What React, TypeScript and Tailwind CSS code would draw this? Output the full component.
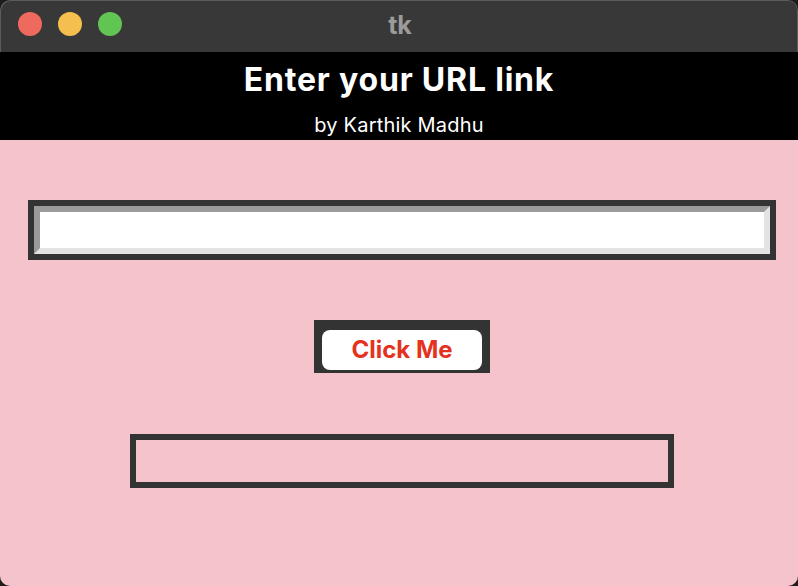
import React from "react";

export default function App() {
  return (
    <div className="w-[798px] h-[586px] bg-[#1c1c1c]" style={{ fontFamily: "Inter, 'Liberation Sans', sans-serif" }}>
      <div className="w-full h-full rounded-[10px] overflow-hidden flex flex-col">
        {/* title bar */}
        <div className="relative h-[52px] bg-[#383838] flex items-center justify-center shrink-0 rounded-t-[10px] shadow-[inset_1px_1px_0_#5c5c5c,inset_-1px_0_0_#5c5c5c]">
          <div className="absolute left-[18px] top-[12px] flex gap-[16px]">
            <div className="w-[24px] h-[24px] rounded-full bg-[#ee6a5f]" />
            <div className="w-[24px] h-[24px] rounded-full bg-[#f5bf4f]" />
            <div className="w-[24px] h-[24px] rounded-full bg-[#61c554]" />
          </div>
          <span className="text-[25px] font-bold text-[#9b9b9b] leading-none ml-[2px] mb-[2px]">tk</span>
        </div>
        {/* header */}
        <div className="h-[88px] bg-black flex flex-col items-center shrink-0">
          <div className="text-white font-bold text-[32px] tracking-[0.8px] leading-none mt-[12px]">Enter your URL link</div>
          <div className="text-white text-[20px] tracking-[0.2px] leading-none mt-[19px]">by Karthik Madhu</div>
        </div>
        {/* body */}
        <div className="flex-1 bg-[#f5c3cc] pl-[28px] pr-[22px] pt-[60px] flex flex-col items-center">
          <div className="w-full border-[6px] border-[#333333]">
            <div className="h-[48px] bg-white border-[6px] border-t-[#9a9a9a] border-l-[#9a9a9a] border-b-[#e3e3e3] border-r-[#e3e3e3]" />
          </div>
          <div className="mt-[60px] w-[176px] h-[53px] bg-[#333333] pt-[10px] px-[8px]">
            <div className="h-[40px] bg-white rounded-[8px] flex items-center justify-center">
              <span className="text-[#e5321f] font-bold text-[24px] leading-none">Click Me</span>
            </div>
          </div>
          <div className="mt-[61px] w-[544px] h-[54px] border-[6px] border-[#333333]" />
        </div>
      </div>
    </div>
  );
}
